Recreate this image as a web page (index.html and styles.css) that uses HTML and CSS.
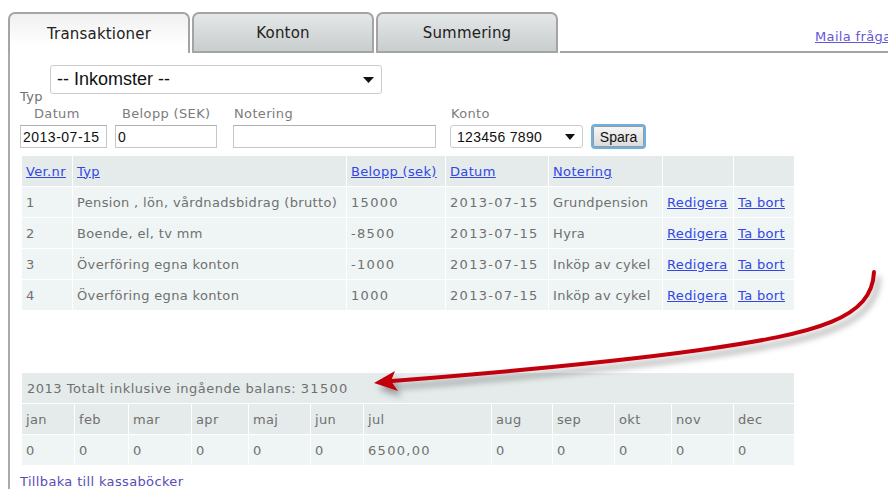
FILE: index.html
```html
<!DOCTYPE html>
<html lang="sv">
<head>
<meta charset="utf-8">
<title>Kassabok – Transaktioner</title>
<link rel="stylesheet" href="styles.css">
</head>
<body>
<div class="page">
  <div class="tabbar">
    <div class="tab active">Transaktioner</div>
    <div class="tab">Konton</div>
    <div class="tab">Summering</div>
    <div class="tabrest"><a class="mail" href="#">Maila fråga</a></div>
  </div>

  <div class="panel">
    <form class="entry">
      <div class="pick pick-big">
        <span>-- Inkomster --</span>
        <svg class="caret" width="11" height="6" viewBox="0 0 11 6"><polygon points="0,0 11,0 5.5,6" fill="#111"/></svg>
      </div>
      <div class="typ">Typ</div>
      <div class="fields">
        <label class="field w-datum"><span class="lbl pad-datum">Datum</span><input class="txt" value="2013-07-15"></label>
        <label class="field w-belopp"><span class="lbl pad-belopp">Belopp (SEK)</span><input class="txt" value="0"></label>
        <label class="field w-note"><span class="lbl pad-note">Notering</span><input class="txt" value=""></label>
        <label class="field w-konto"><span class="lbl pad-konto">Konto</span>
          <span class="pick pick-small"><span>123456 7890</span>
            <svg class="caret" width="10" height="6" viewBox="0 0 10 6"><polygon points="0,0 10,0 5,6" fill="#111"/></svg>
          </span>
        </label>
        <button type="button" class="save">Spara</button>
      </div>
    </form>

    <table class="grid trans">
      <colgroup>
        <col style="width:51px"><col style="width:274px"><col style="width:99px"><col style="width:103px">
        <col style="width:114px"><col style="width:71px"><col style="width:61px">
      </colgroup>
      <thead>
        <tr>
          <th><a href="#">Ver.nr</a></th>
          <th><a href="#">Typ</a></th>
          <th><a href="#">Belopp (sek)</a></th>
          <th><a href="#">Datum</a></th>
          <th><a href="#">Notering</a></th>
          <th></th>
          <th></th>
        </tr>
      </thead>
      <tbody>
        <tr><td>1</td><td>Pension , lön, vårdnadsbidrag (brutto)</td><td class="num">15000</td><td class="num">2013-07-15</td><td>Grundpension</td><td><a href="#">Redigera</a></td><td><a href="#">Ta bort</a></td></tr>
        <tr><td>2</td><td>Boende, el, tv mm</td><td class="num">-8500</td><td class="num">2013-07-15</td><td>Hyra</td><td><a href="#">Redigera</a></td><td><a href="#">Ta bort</a></td></tr>
        <tr><td>3</td><td>Överföring egna konton</td><td class="num">-1000</td><td class="num">2013-07-15</td><td>Inköp av cykel</td><td><a href="#">Redigera</a></td><td><a href="#">Ta bort</a></td></tr>
        <tr><td>4</td><td>Överföring egna konton</td><td class="num">1000</td><td class="num">2013-07-15</td><td>Inköp av cykel</td><td><a href="#">Redigera</a></td><td><a href="#">Ta bort</a></td></tr>
      </tbody>
    </table>

    <table class="grid summary">
      <colgroup>
        <col style="width:53px"><col style="width:54px"><col style="width:63px"><col style="width:57px">
        <col style="width:62px"><col style="width:53px"><col style="width:128px"><col style="width:61px">
        <col style="width:62px"><col style="width:57px"><col style="width:62px"><col style="width:61px">
      </colgroup>
      <thead>
        <tr><th colspan="12" class="total">2013 Totalt inklusive ingående balans: <span class="num">31500</span></th></tr>
        <tr class="months">
          <th>jan</th><th>feb</th><th>mar</th><th>apr</th><th>maj</th><th>jun</th>
          <th>jul</th><th>aug</th><th>sep</th><th>okt</th><th>nov</th><th>dec</th>
        </tr>
      </thead>
      <tbody>
        <tr>
          <td class="num">0</td><td class="num">0</td><td class="num">0</td><td class="num">0</td><td class="num">0</td><td class="num">0</td>
          <td class="num">6500,00</td><td class="num">0</td><td class="num">0</td><td class="num">0</td><td class="num">0</td><td class="num">0</td>
        </tr>
      </tbody>
    </table>

    <a class="back" href="#">Tillbaka till kassaböcker</a>
  </div>

  <!-- hand-drawn pointer from the transaction list down to the yearly total -->
  <svg class="callout" width="888" height="489" viewBox="0 0 888 489">
    <defs>
      <filter id="soft-shadow" x="-5%" y="-20%" width="115%" height="160%">
        <feDropShadow dx="4" dy="6" stdDeviation="3" flood-color="#000" flood-opacity="0.35"/>
      </filter>
    </defs>
    <g filter="url(#soft-shadow)">
      <path d="M874,272 C872,318 820,333 700,350 C600,364 480,374 392,381" fill="none" stroke="#c2000c" stroke-width="4" stroke-linecap="round"/>
      <polygon points="374,383 395,371 391,381 398,391" fill="#c2000c"/>
    </g>
  </svg>
</div>
</body>
</html>
```

FILE: styles.css
```css
html, body {
  margin: 0;
  padding: 0;
}

body {
  width: 888px;
  height: 489px;
  overflow: hidden;
  background: #fff;
  font-family: "DejaVu Sans", Verdana, sans-serif;
  font-size: 13px;
  letter-spacing: 0.35px;
  color: #707070;
}

.page {
  position: relative;
  height: 489px;
}

/* ---------- tabs ---------- */
.tabbar {
  display: flex;
  align-items: flex-end;
  padding: 12px 0 0 8px;
}

.tab {
  box-sizing: border-box;
  width: 182px;
  height: 41px;
  margin-right: 2px;
  border: 2px solid #a4a4a4;
  border-radius: 7px 7px 0 0;
  background: linear-gradient(#e4e7e7, #c8cdcd);
  display: flex;
  align-items: center;
  justify-content: center;
  padding-top: 1px;
  font-size: 15px;
  letter-spacing: 0.2px;
  color: #222;
}

.tab.active {
  background: linear-gradient(#f0f0f0, #fff 80%);
  border-bottom: 0;
  padding-top: 0;
}

.tabrest {
  flex: 1;
  height: 41px;
  box-sizing: border-box;
  border-bottom: 2px solid #a4a4a4;
  display: flex;
  align-items: flex-end;
  justify-content: flex-start;
  padding: 0 0 7px 255px;
  white-space: nowrap;
  overflow: hidden;
}

.mail {
  color: #6357d6;
  text-decoration: underline;
}

/* ---------- main panel ---------- */
.panel {
  margin-left: 8px;
  border-left: 2px solid #aaaaaa;
  padding-left: 10px;
  height: 436px;
  box-sizing: border-box;
}

.entry {
  margin: 0;
  padding-top: 12px;
}

.pick {
  position: relative;
  z-index: 1;
  box-sizing: border-box;
  display: flex;
  align-items: center;
  justify-content: space-between;
  background: #fff;
  border: 1px solid #cbcbcb;
  border-radius: 3px;
  font-family: "Liberation Sans", Arial, sans-serif;
  letter-spacing: 0;
  color: #111;
}

.pick-big {
  width: 332px;
  height: 29px;
  margin-left: 30px;
  padding: 0 7px 0 6px;
  font-size: 18px;
}

.pick-small {
  width: 133px;
  height: 23px;
  padding: 0 7px 0 6px;
  font-size: 14px;
  letter-spacing: 0.3px;
}

.caret {
  display: block;
  flex: none;
}

.typ {
  position: relative;
  margin-top: -5px;
  line-height: 16px;
}

.fields {
  display: flex;
  align-items: flex-end;
  margin-top: 1px;
}

.field {
  display: flex;
  flex-direction: column;
  gap: 3px;
}

.lbl {
  line-height: 16px;
  color: #7c7c7c;
  white-space: nowrap;
}

.w-datum  { width: 95px; }
.w-belopp { width: 118px; }
.w-note   { width: 217px; }
.w-konto  { width: 141px; }

.pad-datum  { padding-left: 14px; }
.pad-belopp { padding-left: 7px; }
.pad-note   { padding-left: 1px; }
.pad-konto  { padding-left: 1px; }

.txt {
  box-sizing: border-box;
  height: 23px;
  margin: 0;
  padding: 0 2px;
  border: 1px solid #c6c6c6;
  border-top-color: #b0b0b0;
  font-family: "Liberation Sans", Arial, sans-serif;
  font-size: 14px;
  letter-spacing: 0.5px;
  color: #111;
  background: #fff;
}

.w-datum .txt  { width: 87px; }
.w-belopp .txt { width: 102px; }
.w-note .txt   { width: 203px; }

.save {
  box-sizing: border-box;
  width: 55px;
  height: 25px;
  margin: 0 0 -1px 0;
  padding: 0;
  border: 2px solid #68b2e4;
  border-radius: 4px;
  background: linear-gradient(#f7f7f7, #dadada);
  box-shadow: inset 0 0 0 1px #9a9a9a;
  font-family: "Liberation Sans", Arial, sans-serif;
  font-size: 14px;
  color: #111;
}

/* ---------- grids ---------- */
.grid {
  table-layout: fixed;
  border-collapse: collapse;
  width: 773px;
  margin-left: 1px;
}

.grid th,
.grid td {
  box-sizing: border-box;
  height: 31px;
  padding: 0 0 0 4px;
  border: 1px solid #fff;
  text-align: left;
  font-weight: normal;
  white-space: nowrap;
  overflow: hidden;
  color: #707070;
}

.grid thead th { background: #e4ebea; }
.grid tbody td { background: #eef5f4; }

.grid a {
  color: #3247e4;
  text-decoration: underline;
}

.num { letter-spacing: 1.3px; }

.trans {
  margin-top: 7px;
}

.summary {
  margin-top: 61px;
}

.summary .total {
  padding-left: 5px;
  letter-spacing: 0.5px;
}

.summary .total .num {
  letter-spacing: 1.3px;
}

.back {
  display: block;
  margin-top: 8px;
  color: #5a4cb6;
  text-decoration: none;
  line-height: 16px;
}

/* ---------- pointer overlay ---------- */
.callout {
  position: absolute;
  left: 0;
  top: 0;
  pointer-events: none;
}
```
